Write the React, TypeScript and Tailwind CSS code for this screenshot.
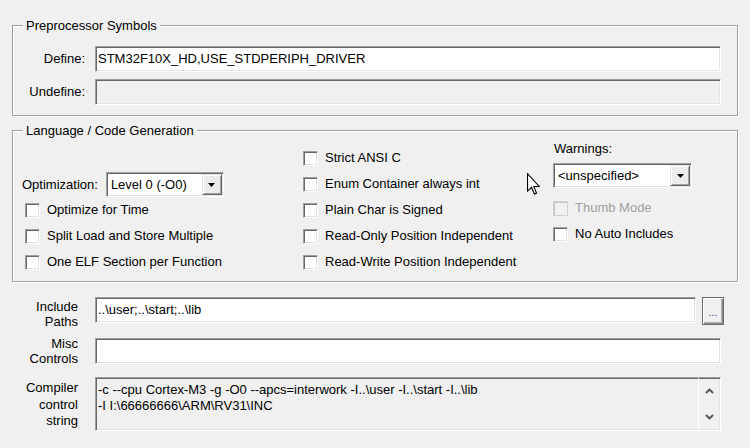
const sunken =
  "border border-t-[#a0a0a0] border-l-[#a0a0a0] border-b-white border-r-white shadow-[inset_1px_1px_0_#696969,inset_-1px_-1px_0_#e3e3e3]";
const raised =
  "border border-t-[#e3e3e3] border-l-[#e3e3e3] border-b-[#696969] border-r-[#696969] shadow-[inset_1px_1px_0_#fff,inset_-1px_-1px_0_#a0a0a0]";
const groupBox =
  "ml-[12px] w-[726px] border border-[#a0a0a0] shadow-[inset_1px_1px_0_#fff,1px_1px_0_#fff]";

const compilerLines = [
  "-c --cpu Cortex-M3 -g -O0 --apcs=interwork -I..\\user -I..\\start -I..\\lib",
  "-I I:\\66666666\\ARM\\RV31\\INC",
];

const Arrow = () => (
  <svg width="7" height="4" viewBox="0 0 7 4">
    <polygon points="0,0 7,0 3.5,4" fill="#000" />
  </svg>
);

const Combo = ({ value, width }: { value: string; width: string }) => (
  <div className={`${sunken} ${width} h-[25px] bg-white p-[1px] flex items-stretch`}>
    <span className="flex-1 pl-[3px] flex items-center whitespace-nowrap overflow-hidden">
      {value}
    </span>
    <div className={`${raised} w-[20px] bg-[#ececec] flex items-center justify-center`}>
      <Arrow />
    </div>
  </div>
);

const Check = ({ label, disabled }: { label: string; disabled?: boolean }) => (
  <div className="flex items-center h-[26px]">
    <div
      className={
        disabled
          ? "w-[15px] h-[15px] border border-[#d0d0d0] bg-[#f0f0f0] shadow-[inset_1px_1px_0_#c4c4c4]"
          : `w-[15px] h-[15px] bg-white ${sunken}`
      }
    />
    <span className={`ml-[7px] whitespace-nowrap ${disabled ? "text-[#a0a0a0]" : ""}`}>
      {label}
    </span>
  </div>
);

const Legend = ({ children }: { children: string }) => (
  <legend className="ml-[10px] px-[3px] leading-[15px] bg-[#f0f0f0]">{children}</legend>
);

const Cursor = () => (
  <svg
    className="absolute left-[527px] top-[173px]"
    width="13"
    height="22"
    viewBox="0 0 12 20"
  >
    <path
      d="M0.5 0.5 L0.5 16.5 L4.2 13 L6.8 19.2 L8.8 18.4 L6.3 12.3 L11.3 12.3 Z"
      fill="#fff"
      stroke="#000"
      strokeWidth="1"
      strokeLinejoin="miter"
    />
  </svg>
);

const App = () => {
  return (
    <div className="relative w-[750px] h-[448px] overflow-hidden bg-[#f0f0f0] pt-[18px] text-[13px] text-black font-['Liberation_Sans',Arial,sans-serif]">
      {/* Preprocessor Symbols */}
      <fieldset className={`${groupBox} pb-[10px]`}>
        <Legend>Preprocessor Symbols</Legend>
        <div className="mt-[13px] flex flex-col gap-[7px]">
          <div className="flex items-center">
            <span className="w-[72px] mr-[10px] text-right">Define:</span>
            <div className={`${sunken} w-[626px] h-[26px] bg-white pl-[2px] flex items-center`}>
              STM32F10X_HD,USE_STDPERIPH_DRIVER
            </div>
          </div>
          <div className="flex items-center">
            <span className="w-[72px] mr-[10px] text-right">Undefine:</span>
            <div className={`${sunken} w-[626px] h-[26px] bg-[#f0f0f0]`} />
          </div>
        </div>
      </fieldset>

      {/* Language / Code Generation */}
      <fieldset className={`${groupBox} mt-[7px] pb-[6px]`}>
        <Legend>Language / Code Generation</Legend>
        <div className="flex">
          <div className="w-[290px] pt-[34px]">
            <div className="flex items-center h-[25px] pl-[9px]">
              <span className="mr-[8px]">Optimization:</span>
              <Combo value="Level 0 (-O0)" width="w-[118px]" />
            </div>
            <div className="pl-[12px]">
              <Check label="Optimize for Time" />
              <Check label="Split Load and Store Multiple" />
              <Check label="One ELF Section per Function" />
            </div>
          </div>
          <div className="w-[250px] pt-[7px]">
            <Check label="Strict ANSI C" />
            <Check label="Enum Container always int" />
            <Check label="Plain Char is Signed" />
            <Check label="Read-Only Position Independent" />
            <Check label="Read-Write Position Independent" />
          </div>
          <div className="pt-[3px]">
            <div className="leading-[15px] pl-[1px]">Warnings:</div>
            <div className="mt-[7px]">
              <Combo value="<unspecified>" width="w-[139px]" />
            </div>
            <div className="mt-[7px]">
              <Check label="Thumb Mode" disabled />
              <Check label="No Auto Includes" />
            </div>
          </div>
        </div>
      </fieldset>

      {/* Include / Misc / Compiler string */}
      <div className="mt-[15px] flex flex-col">
        <div className="flex items-start">
          <div className="w-[78px] pt-[2px] text-right leading-[15px]">
            Include
            <br />
            Paths
          </div>
          <div className={`${sunken} ml-[17px] w-[601px] h-[26px] bg-white pl-[2px] flex items-center`}>
            ..\user;..\start;..\lib
          </div>
          <div
            className={`ml-[6px] w-[22px] h-[28px] bg-[#f0f0f0] border border-[#6e6e6e] shadow-[inset_1px_1px_0_#fff,inset_-1px_-1px_0_#8a8a8a,inset_-2px_-2px_0_#b0b0b0] flex items-end justify-center pb-[6px] text-[11px] leading-[11px] text-[#4040a0]`}
          >
            ...
          </div>
        </div>

        <div className="mt-[7px] flex items-center">
          <div className="w-[78px] text-right leading-[15px]">
            Misc
            <br />
            Controls
          </div>
          <div className={`${sunken} ml-[17px] w-[626px] h-[26px] bg-white`} />
        </div>

        <div className="mt-[11px] flex items-start">
          <div className="w-[78px] pt-[3px] text-right leading-[16.5px]">
            Compiler
            <br />
            control
            <br />
            string
          </div>
          <div className={`${sunken} ml-[17px] w-[626px] h-[54px] bg-[#f0f0f0] flex`}>
            <div className="flex-1 pl-[2px] pt-[4px] leading-[16px] whitespace-nowrap overflow-hidden">
              {compilerLines.map((line) => (
                <div key={line}>{line}</div>
              ))}
            </div>
            <div className="w-[22px] border-l border-white flex flex-col items-center justify-between py-[10px]">
              <svg width="9" height="6" viewBox="0 0 9 6">
                <polyline points="1,5 4.5,1.5 8,5" fill="none" stroke="#505050" strokeWidth="1.8" />
              </svg>
              <svg width="9" height="6" viewBox="0 0 9 6">
                <polyline points="1,1 4.5,4.5 8,1" fill="none" stroke="#505050" strokeWidth="1.8" />
              </svg>
            </div>
          </div>
        </div>
      </div>

      <Cursor />
    </div>
  );
};

export default App;
